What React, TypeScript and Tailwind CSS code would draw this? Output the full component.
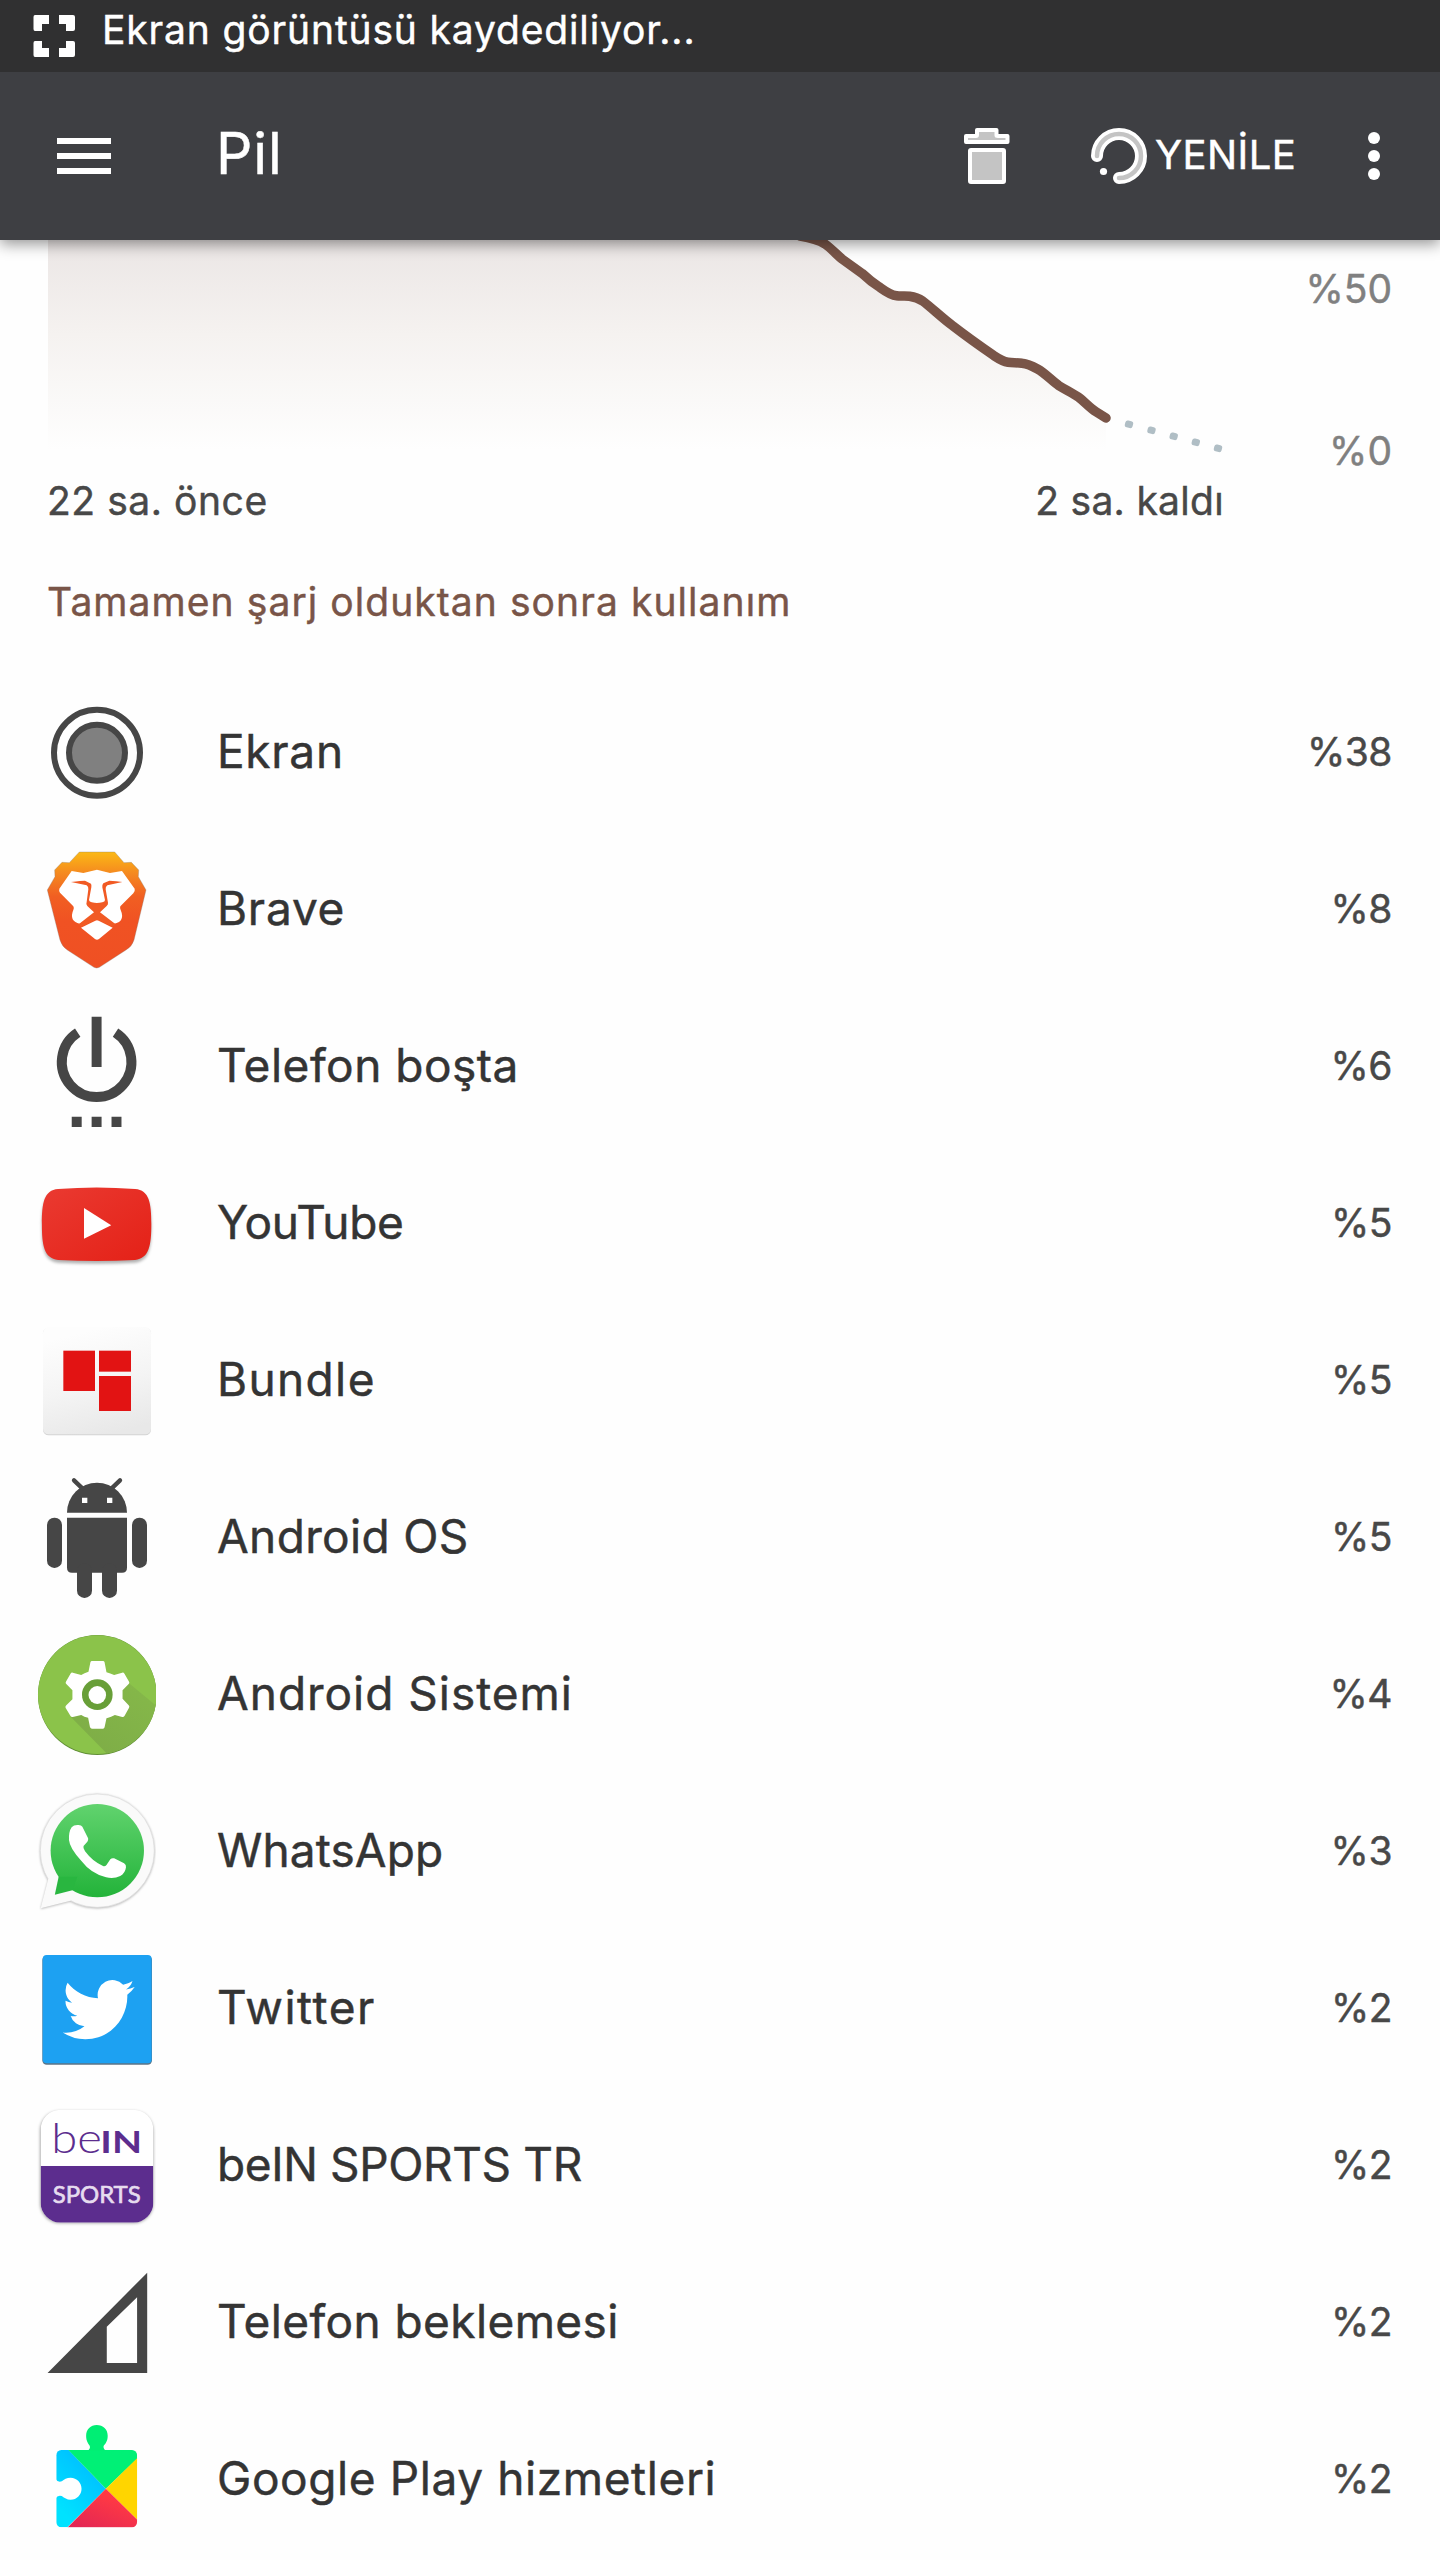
import type { ReactNode } from "react";

function EkranIcon() {
  return (
    <g fill="none" stroke="#464646" strokeWidth="6">
      <circle cx="61" cy="77.8" r="43" />
      <circle cx="61" cy="77.8" r="28" fill="#808080" />
    </g>
  );
}

function BraveIcon() {
  return (
    <g transform="translate(-16 -152) scale(.33333)">
      <linearGradient id="brave" x1="0" y1="516" x2="0" y2="866" gradientUnits="userSpaceOnUse">
        <stop offset="0" stopColor="#fbb915" />
        <stop offset=".18" stopColor="#f58a20" />
        <stop offset=".38" stopColor="#f15f22" />
        <stop offset=".6" stopColor="#f05223" />
        <stop offset="1" stopColor="#ef5023" />
      </linearGradient>
      <path
        fill="url(#brave)"
        stroke="#8a7a72"
        strokeOpacity=".5"
        strokeWidth="2"
        d="M178 516H284L312 548 334 547 356 570 355 590 378 630 342 780Q336 800 318 810L238 862Q230 866 222 862L142 810Q126 800 120 780L82 630 105 590 104 570 126 547 148 548Z"
      />
      <path
        fill="#fff"
        d="M155 573L190 579 231 569 270 579 306 573 344 626Q346 634 340 640L301 679Q299 684 302 690 310 708 303 720 298 728 283 731L237 708Q231 704 225 708L179 731Q164 728 158 718 153 705 160 690 163 684 160 679L120 638Q116 632 118 626Z"
      />
      <path
        fill="#f15a24"
        d="M153 606Q185 602 195 602L213 611Q215 615 214 622L207 660Q208 666 215 667 231 671 247 667 255 665 255 660L247 622Q246 614 250 610L268 602Q290 603 307 606L262 616Q256 620 257 628L264 668Q265 673 260 678L240 697 287 733 277 741 236 721Q231 718 226 721L184 741 176 733 222 697 202 678Q197 673 200 666L205 628Q206 620 200 616Z"
      />
      <path fill="#fff" d="M183 743L226 722Q231 719 236 722L278 743 237 777Q231 782 225 777Z" />
    </g>
  );
}

function IdleIcon() {
  return (
    <g transform="translate(-16 1) scale(.33163 .33333)" fill="#464646">
      <path d="M216 80h30v151h-30zM156 380h30v31h-30zM216 380h30v31h-30zM276 380h30v31h-30z" />
      <path d="M174 128A105 105 0 1 0 288 128" fill="none" stroke="#464646" strokeWidth="30" />
    </g>
  );
}

function YouTubeIcon() {
  const body =
    "M66 702C66 640 72 600 115 597Q231 588 347 597C390 600 396 640 396 702C396 765 390 805 347 810Q231 816 115 810C72 805 66 765 66 702Z";
  return (
    <g transform="translate(-16 -156) scale(.33163 .33333)">
      <linearGradient id="yt" x1="0" y1="0" x2="1" y2="1">
        <stop offset="0" stopColor="#ea3a31" />
        <stop offset="1" stopColor="#e42117" />
      </linearGradient>
      <path d={body} className="fill-black/30 blur-[5px]" transform="translate(0 8)" />
      <path d={body} fill="url(#yt)" />
      <path d="M193 654L275 706 193 746Z" fill="#fff" />
    </g>
  );
}

function BundleIcon() {
  return (
    <g transform="translate(-16 -3) scale(.33333)">
      <linearGradient id="bundle" x1=".35" y1="0" x2=".6" y2="1">
        <stop offset=".05" stopColor="#fdfdfd" />
        <stop offset=".55" stopColor="#f4f4f4" />
        <stop offset="1" stopColor="#e8e8e8" />
      </linearGradient>
      <rect x="69" y="83" width="324" height="323" rx="17" fill="#d4d4d4" />
      <rect x="69" y="81" width="324" height="322" rx="17" fill="url(#bundle)" />
      <g fill="#e21313">
        <rect x="130" y="152" width="95" height="121" />
        <rect x="237" y="152" width="96" height="63" />
        <rect x="237" y="228" width="96" height="105" />
      </g>
    </g>
  );
}

function AndroidIcon() {
  return (
    <g transform="translate(-16 -160) scale(.33333)" fill="#464646">
      <path d="M141 638A90 90 0 0 1 321 638Z" />
      <path d="M162 541L187 565M300 541L275 565" stroke="#464646" strokeWidth="13" strokeLinecap="round" />
      <path d="M186 593h16v16h-16zM261 593h16v16h-16z" fill="#fff" />
      <path d="M141 653H321V803q0 15-15 15H156q-15 0-15-15Z" />
      <rect x="171" y="790" width="45" height="104" rx="22" />
      <rect x="246" y="790" width="45" height="104" rx="22" />
      <rect x="81" y="653" width="45" height="151" rx="22" />
      <rect x="336" y="653" width="45" height="151" rx="22" />
    </g>
  );
}

function SystemIcon() {
  return (
    <g transform="translate(-16 -7) scale(.38265 .33333)">
      <clipPath id="sysClip">
        <ellipse cx="202" cy="254" rx="155" ry="179" />
      </clipPath>
      <linearGradient id="sysShade" x1="0" y1="1" x2="1" y2="0">
        <stop offset="0" stopColor="#7dab46" />
        <stop offset="1" stopColor="#86b94a" />
      </linearGradient>
      <ellipse cx="202" cy="255" rx="155" ry="180" fill="#5f8d34" />
      <ellipse cx="202" cy="254" rx="155" ry="178" fill="#8bc34a" />
      <path d="M133 321L230 434H370V300L285 220 202 254Z" fill="url(#sysShade)" clipPath="url(#sysClip)" />
      <path
        fill="#fff"
        d="M188 153H217Q220 153 221 157L226 187Q236 190 246 195L267 188Q271 187 273 191L285 215Q287 219 284 222L268 241V266L284 286Q287 289 285 293L273 318Q271 322 267 321L248 315Q236 322 226 325L221 352Q220 356 217 356H188Q185 356 183 352L178 323Q168 321 160 315L138 321Q134 322 132 318L119 293Q118 289 121 286L137 268V241L121 222Q118 219 120 215L132 191Q134 187 138 188L160 195Q168 189 179 185L184 157Q185 153 188 153Z"
      />
      <ellipse cx="202" cy="254" rx="40" ry="46" fill="#689f38" />
      <ellipse cx="202" cy="255" rx="23" ry="27" fill="#fff" />
    </g>
  );
}

function WhatsAppIcon() {
  return (
    <g transform="translate(-16 -164) scale(.38265 .33333)">
      <linearGradient id="wa" x1="0" y1="0" x2="0" y2="1">
        <stop offset="0" stopColor="#61d36e" />
        <stop offset="1" stopColor="#23b33a" />
      </linearGradient>
      <g className="drop-shadow-[0_2px_3px_rgba(0,0,0,0.3)]" fill="#fafafa">
        <ellipse cx="202" cy="722" rx="149" ry="170" stroke="#dcdcdc" strokeWidth="2" />
        <path d="M74 806L54 895 132 872 160 800Z" />
      </g>
      <ellipse cx="202" cy="722" rx="122" ry="140" fill="url(#wa)" />
      <path d="M101 800L91 854 137 841 150 800Z" fill="#29b640" />
      <path
        fill="#fff"
        d="M135 652Q140 645 150 645 160 644 163 650L178 685Q179 690 176 695L166 708Q164 714 170 724 190 755 217 768 222 770 226 765L236 748Q240 743 246 745L272 760Q278 764 277 772 275 790 262 798 245 808 225 802 185 790 160 752 130 715 128 690 127 665 135 652Z"
      />
    </g>
  );
}

function TwitterIcon() {
  return (
    <g transform="translate(-16 -11) scale(.33333)">
      <rect x="67" y="107" width="329" height="327" rx="13" fill="#5c7486" />
      <rect x="68" y="105" width="327" height="325" rx="12" fill="#1da1f2" />
      <path
        fill="#fff"
        transform="translate(128 159.5) scale(9 9.1)"
        d="M23.953 4.57a10 10 0 01-2.825.775 4.958 4.958 0 002.163-2.723c-.951.555-2.005.959-3.127 1.184a4.92 4.92 0 00-8.384 4.482C7.69 8.095 4.067 6.13 1.64 3.162a4.822 4.822 0 00-.666 2.475c0 1.71.87 3.213 2.188 4.096a4.904 4.904 0 01-2.228-.616v.06a4.923 4.923 0 003.946 4.827 4.996 4.996 0 01-2.212.085 4.936 4.936 0 004.604 3.417 9.867 9.867 0 01-6.102 2.105c-.39 0-.779-.023-1.17-.067a13.995 13.995 0 007.557 2.209c9.053 0 13.998-7.496 13.998-13.985 0-.21 0-.42-.015-.63A9.935 9.935 0 0024 4.59z"
      />
    </g>
  );
}

function BeinIcon() {
  return (
    <g transform="translate(-16 -168) scale(.33333)" className="font-['Lato']">
      <clipPath id="beinClip">
        <rect x="62" y="569" width="338" height="339" rx="60" />
      </clipPath>
      <rect x="60" y="573" width="340" height="337" rx="60" className="fill-black/35 blur-[4px]" />
      <g clipPath="url(#beinClip)">
        <rect x="62" y="569" width="338" height="339" fill="#fff" />
        <rect x="62" y="738" width="338" height="170" fill="#5c2d8e" />
      </g>
      <g className="[-webkit-text-stroke:0]">
        <text x="94" y="700" fontSize="126" textLength="152" lengthAdjust="spacingAndGlyphs" className="fill-[#5c2d8e] font-light">
          be
        </text>
        <text x="241" y="700" fontSize="94" textLength="125" lengthAdjust="spacingAndGlyphs" className="fill-[#5c2d8e] font-bold">
          IN
        </text>
        <text x="98" y="848" fontSize="71" textLength="264" lengthAdjust="spacingAndGlyphs" className="fill-[#e6dcef] stroke-[#e6dcef] stroke-2">
          SPORTS
        </text>
      </g>
    </g>
  );
}

function SignalIcon() {
  return (
    <g transform="translate(-16 -5) scale(.45918 .33333)">
      <path fillRule="evenodd" fill="#464646" d="M60 399L277 98V399ZM189 260V369H255V172Z" />
    </g>
  );
}

function PlayServicesIcon() {
  return (
    <g transform="translate(-16 -162) scale(.45918 .33333)">
      <clipPath id="playClip">
        <rect x="79" y="630" width="176" height="232" rx="11" ry="16" />
      </clipPath>
      <linearGradient id="playBlue" x1="0" y1="1" x2=".6" y2="0">
        <stop offset="0.2" stopColor="#00e2ff" />
        <stop offset="1" stopColor="#00bcff" />
      </linearGradient>
      <linearGradient id="playRed" x1="0" y1="1" x2=".6" y2=".2">
        <stop offset="0" stopColor="#e02455" />
        <stop offset="1" stopColor="#ff3944" />
      </linearGradient>
      <g clipPath="url(#playClip)">
        <path d="M79 630H106L187 746 103 862H79Z" fill="url(#playBlue)" />
        <path d="M104 628H255V656L187 746Z" fill="#00f076" />
        <path d="M256 653L187 746 256 840Z" fill="#ffd500" />
        <path d="M103 863L187 746 256 840V863Z" fill="url(#playRed)" />
      </g>
      <path
        d="M146 632Q154 628 152 618C149 610 144 604 144 587C144 568 154 555 167 555C181 555 191 568 191 587C191 604 186 610 182 618Q181 628 188 632Z"
        fill="#00ee74"
      />
      <path
        d="M77 716Q82 728 91 724C96 718 102 713 110 713C124 713 134 728 134 746C134 764 124 779 110 779C102 779 97 774 91 768Q82 764 77 776Z"
        fill="#fefefe"
      />
    </g>
  );
}

interface Usage {
  name: string;
  percent: string;
  icon: ReactNode;
  tracking: string;
}

const usages: Usage[] = [
  { name: "Ekran", percent: "%38", icon: <EkranIcon />, tracking: "tracking-[0.71px]" },
  { name: "Brave", percent: "%8", icon: <BraveIcon />, tracking: "tracking-[0.77px]" },
  { name: "Telefon boşta", percent: "%6", icon: <IdleIcon />, tracking: "tracking-[0.5px]" },
  { name: "YouTube", percent: "%5", icon: <YouTubeIcon />, tracking: "tracking-[-0.3px]" },
  { name: "Bundle", percent: "%5", icon: <BundleIcon />, tracking: "tracking-[1.37px]" },
  { name: "Android OS", percent: "%5", icon: <AndroidIcon />, tracking: "tracking-[0.36px]" },
  { name: "Android Sistemi", percent: "%4", icon: <SystemIcon />, tracking: "tracking-[0.98px]" },
  { name: "WhatsApp", percent: "%3", icon: <WhatsAppIcon />, tracking: "tracking-[0.12px]" },
  { name: "Twitter", percent: "%2", icon: <TwitterIcon />, tracking: "tracking-[1.5px]" },
  { name: "beIN SPORTS TR", percent: "%2", icon: <BeinIcon />, tracking: "tracking-[-0.37px]" },
  { name: "Telefon beklemesi", percent: "%2", icon: <SignalIcon />, tracking: "tracking-[0.4px]" },
  { name: "Google Play hizmetleri", percent: "%2", icon: <PlayServicesIcon />, tracking: "tracking-[0.6px]" },
];

function StatusBar() {
  return (
    <div className="relative z-20 flex h-[72px] items-start bg-[#303031] pl-[33px] text-white">
      <svg width="43" height="43" viewBox="0 0 43 43" className="mt-[15px]" fill="#fff">
        <path d="M2 0H16V9H9V16H2Q.5 16 .5 14V2Q.5 0 2 0ZM26 0H40Q42 0 42 2V14Q42 16 40 16H33V9H26ZM.5 28Q.5 26 2 26H9V33H16V42H2Q.5 42 .5 40ZM33 26H40Q42 26 42 28V40Q42 42 40 42H26V33H33Z" />
      </svg>
      <span className="mt-[10px] ml-[26px] text-[39px] leading-[40px] tracking-[0.85px] whitespace-nowrap">
        Ekran görüntüsü kaydediliyor...
      </span>
    </div>
  );
}

function Toolbar() {
  return (
    <header className="relative z-10 flex h-[168px] items-center bg-[#3e3f43] pl-[57px] text-white shadow-[0_4px_14px_rgba(0,0,0,0.42)]">
      <div className="flex w-[54px] flex-col gap-[9px]">
        <div className="h-[6px] bg-white" />
        <div className="h-[6px] bg-white" />
        <div className="h-[6px] bg-white" />
      </div>
      <h1 className="mb-[4px] ml-[105px] w-[747px] text-[57px] leading-[60px] tracking-[0.9px]">Pil</h1>
      <svg width="48" height="58" viewBox="963 127 48 58" className="shrink-0" fill="#c4c4c4" stroke="#fff" strokeWidth="4" strokeLinejoin="round">
        <path d="M977 130H996.500V135.500Q996.500 136 998 136H1007.500V142H966V136H976Q977 136 977 135Z" />
        <rect x="970" y="150" width="34" height="32" rx="1" />
      </svg>
      <svg width="58" height="58" viewBox="1090 127 58 58" className="ml-[79px] shrink-0" fill="none" strokeLinecap="round">
        <path d="M1097 156A22 22 0 1 1 1119 178" stroke="#fff" strokeWidth="12" />
        <path d="M1097 156A22 22 0 1 1 1119 178" stroke="#c4c4c4" strokeWidth="4.500" />
        <circle cx="1103.500" cy="171.500" r="3.600" fill="#fff" />
      </svg>
      <span className="mb-[3px] ml-[7px] w-[148px] text-[40px] leading-[48px] tracking-[0.4px]">YENİLE</span>
      <div className="ml-[65px] flex flex-col gap-[6px]">
        <div className="size-[12px] rounded-full bg-white" />
        <div className="size-[12px] rounded-full bg-white" />
        <div className="size-[12px] rounded-full bg-white" />
      </div>
    </header>
  );
}

// battery level so far, the part below the toolbar
const LEVEL =
  "C812 238 819 240 825 244C832 249 837 255 842.400 259.300L862 273.300C868 279 873 283 879 286.700C885 291 890 295 896.600 295.700C901 296.400 905 295.500 909.600 296.300C914 297 918 298 922.600 301C932 308 942 318 953 326C966 336 980 346 994 355.700C999 359 1003 361.500 1008 362.300C1013 363 1017 362.500 1022 363.300C1028 364 1032 366 1037.500 369C1045 373 1052 381 1059 385.700C1066 390 1072 393 1078.700 397.300C1084 401 1090 408 1096 411.700L1106 418";

const projected = [
  [1129, 424.3],
  [1151.5, 430.3],
  [1173.7, 436.3],
  [1195.8, 442.3],
  [1218, 448.3],
];

function BatteryChart() {
  return (
    <section className="flex h-[241px] justify-between pr-[48px]">
      <svg width="1230" height="241" viewBox="0 240 1230 241">
        <linearGradient id="level" x1="0" y1="240" x2="0" y2="450" gradientUnits="userSpaceOnUse">
          <stop offset="0" stopColor="#ebe6e5" />
          <stop offset=".45" stopColor="#f5f2f0" />
          <stop offset="1" stopColor="#fefefe" />
        </linearGradient>
        <path d={`M48 236H800${LEVEL}V450H48Z`} fill="url(#level)" />
        <path d={`M800 236${LEVEL}`} fill="none" stroke="#795548" strokeWidth="9.5" strokeLinecap="round" />
        {projected.map(([x, y]) => (
          <rect key={x} x={x - 4} y={y - 3.5} width="8" height="7" rx="2.5" transform={`rotate(15 ${x} ${y})`} fill="#b0bec5" />
        ))}
      </svg>
      <div className="flex flex-col items-end gap-[122px] pt-[29px] text-[39px] leading-[40px] text-[#808080]">
        <span>%50</span>
        <span>%0</span>
      </div>
    </section>
  );
}

export default function App() {
  return (
    <div className="h-[2560px] w-[1440px] overflow-hidden bg-[#fefefe] font-['Inter','Roboto',sans-serif] [-webkit-text-stroke:0.45px]">
      <StatusBar />
      <Toolbar />
      <BatteryChart />
      <div className="flex justify-between pr-[216px] pl-[47px] text-[39px] leading-[40px] text-[#484848]">
        <span className="tracking-[0.55px]">22 sa. önce</span>
        <span className="tracking-[0.3px]">2 sa. kaldı</span>
      </div>
      <h2 className="mt-[61px] pl-[47px] text-[39px] leading-[40px] tracking-[1.07px] text-[#795548]">
        Tamamen şarj olduktan sonra kullanım
      </h2>
      <ul className="mt-[53px]">
        {usages.map((usage) => (
          <li key={usage.name} className="flex h-[157px] items-center pr-[48px] pl-[36px]">
            <svg width="120" height="157" viewBox="0 0 120 157" className="shrink-0">
              {usage.icon}
            </svg>
            <span className={`mb-[5px] ml-[61px] grow text-[46px] leading-[56px] text-[#343434] ${usage.tracking}`}>
              {usage.name}
            </span>
            <span className="mb-[3px] text-[39px] leading-[48px] tracking-[-0.5px] text-[#484848]">{usage.percent}</span>
          </li>
        ))}
      </ul>
    </div>
  );
}
